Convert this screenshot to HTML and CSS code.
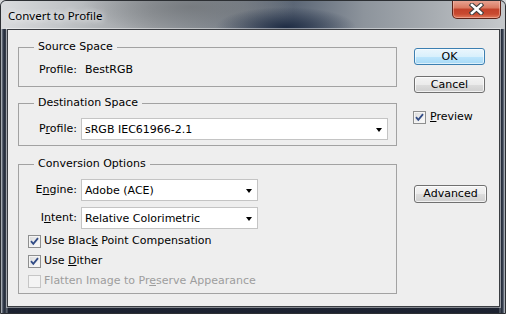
FILE: index.html
```html
<!DOCTYPE html>
<html>
<head>
    <title>Convert to Profile</title>
    <meta charset="utf-8">
    <link rel="stylesheet" href="styles.css">
</head>
<body>
    <div class="window">
        <div class="titlebar">
            <span class="title">Convert to Profile</span>
            <div class="close">
                <svg width="15" height="12" viewBox="0 0 15 12">
                    <path d="M3 2 L12 10 M12 2 L3 10" stroke="#3d3d3d" stroke-width="4.6" stroke-linecap="square" fill="none"/>
                    <path d="M3 2 L12 10 M12 2 L3 10" stroke="#ffffff" stroke-width="2.6" stroke-linecap="square" fill="none"/>
                </svg>
            </div>
        </div>

        <div class="client">
            <div class="groups">
                <fieldset class="group">
                    <legend>Source Space</legend>
                    <div class="body body-source">
                        <div class="row">
                            <span class="lbl">Profile:</span>
                            <span class="value">BestRGB</span>
                        </div>
                    </div>
                </fieldset>

                <fieldset class="group group-dest">
                    <legend>Destination Space</legend>
                    <div class="body body-dest">
                        <div class="row">
                            <span class="lbl">P<u>r</u>ofile:</span>
                            <div class="select select-wide">
                                <span>sRGB IEC61966-2.1</span>
                                <span class="arrow"></span>
                            </div>
                        </div>
                    </div>
                </fieldset>

                <fieldset class="group group-conv">
                    <legend>Conversion Options</legend>
                    <div class="body body-conv">
                        <div class="row">
                            <span class="lbl">E<u>n</u>gine:</span>
                            <div class="select">
                                <span>Adobe (ACE)</span>
                                <span class="arrow"></span>
                            </div>
                        </div>
                        <div class="row row-intent">
                            <span class="lbl">I<u>n</u>tent:</span>
                            <div class="select">
                                <span>Relative Colorimetric</span>
                                <span class="arrow"></span>
                            </div>
                        </div>
                        <div class="checks">
                            <label class="check">
                                <span class="box checked"></span>
                                <span>Use Blac<u>k</u> Point Compensation</span>
                            </label>
                            <label class="check">
                                <span class="box checked"></span>
                                <span>Use <u>D</u>ither</span>
                            </label>
                            <label class="check disabled">
                                <span class="box"></span>
                                <span>Flatten Image to Pr<u>e</u>serve Appearance</span>
                            </label>
                        </div>
                    </div>
                </fieldset>
            </div>

            <div class="actions">
                <button class="btn btn-default">OK</button>
                <button class="btn btn-cancel">Cancel</button>
                <label class="check preview">
                    <span class="box checked"></span>
                    <span><u>P</u>review</span>
                </label>
                <button class="btn btn-adv">Advanced</button>
            </div>
        </div>
    </div>
</body>
</html>
```

FILE: styles.css
```css
html, body {
    margin: 0;
    padding: 0;
}
body {
    width: 506px;
    height: 314px;
    overflow: hidden;
    background: #d4d6d8;
    font-family: "DejaVu Sans", sans-serif;
    font-size: 11px;
    color: #000;
}
.window {
    width: 506px;
    height: 314px;
    box-sizing: border-box;
    border: 1px solid #2c2f33;
    border-radius: 6px 6px 0 0;
    display: flex;
    flex-direction: column;
    overflow: hidden;
    background:
        linear-gradient(to right, #c9cdd1 0, #3b4454 2px, #222a38 4px, #6b727c 6px, rgba(0,0,0,0) 7px),
        linear-gradient(to left, #c9cdd1 0, #3b4454 2px, #1f2735 4px, #6b727c 5px, rgba(0,0,0,0) 6px),
        linear-gradient(to bottom, #555d69 0, #2f3745 60%, #1c2230 100%);
}
.titlebar {
    height: 28px;
    display: flex;
    justify-content: space-between;
    align-items: flex-start;
    background:
        radial-gradient(ellipse 70px 20px at 285px 26px, rgba(28,42,66,0.95), rgba(28,42,66,0)),
        radial-gradient(ellipse 110px 26px at 190px 6px, rgba(110,114,118,0.7), rgba(110,114,118,0)),
        linear-gradient(to right, #dadcde 0, #c2c5c8 12%, #9a9ea2 30%, #7a818a 48%, #5b6676 58%, #8d949c 72%, #a8adb2 86%, #c6c9cc 100%);
}
.title {
    margin: 7px 0 0 7px;
    font-family: "Noto Sans", "Open Sans", sans-serif;
    font-size: 11.5px;
    line-height: 16px;
    color: #000;
    text-shadow: 0 0 6px #fff, 0 0 10px rgba(255,255,255,0.8);
}
.close {
    width: 47px;
    height: 18px;
    margin: -1px 4px 0 0;
    border: 1px solid #5c2318;
    border-top: none;
    border-radius: 0 0 5px 5px;
    display: flex;
    align-items: center;
    justify-content: center;
    background: linear-gradient(to bottom, #e9a898 0, #d9785f 45%, #c2412a 50%, #c94a30 78%, #e07a5c 100%);
    box-shadow: inset 0 0 0 1px rgba(255,210,200,0.45);
}
.client {
    flex: 1;
    margin: 0 5px 6px 6px;
    border: 1px solid #3a3d42;
    background: #eeeeee;
    display: flex;
    padding: 10px 0 0 10px;
    box-shadow: 0 0 0 1px rgba(255,255,255,0.45);
}
.groups {
    width: 379px;
}

/* group boxes */
.group {
    margin: 0;
    padding: 0;
    border: 1px solid #a2a2a2;
    min-width: 0;
}
.group legend {
    margin-left: 15px;
    padding: 0 4px;
    line-height: 14px;
}
.group-dest {
    margin-top: 9px;
}
.group-conv {
    margin-top: 11px;
}
.body-source {
    padding: 9px 0 9px 0;
}
.body-dest {
    padding: 8px 0 5px 0;
}
.body-conv {
    padding: 8px 0 2px 0;
}
.row {
    display: flex;
    align-items: center;
    gap: 4px;
}
.row-intent {
    margin-top: 6px;
}
.lbl {
    width: 58px;
    text-align: right;
    line-height: 14px;
}
.value {
    padding-left: 4px;
    line-height: 14px;
}
.select {
    width: 177px;
    height: 22px;
    box-sizing: border-box;
    border: 1px solid #c4c4c4;
    background: #fff;
    display: flex;
    align-items: center;
    justify-content: space-between;
    padding: 0 5px 0 3px;
}
.select-wide {
    width: 307px;
}
.arrow {
    width: 0;
    height: 0;
    border-left: 3.5px solid transparent;
    border-right: 3.5px solid transparent;
    border-top: 4px solid #000;
    margin-top: 1px;
}

/* checkboxes */
.checks {
    margin-top: 2px;
    padding-left: 9px;
}
.check {
    display: flex;
    align-items: center;
    gap: 3px;
    height: 20px;
    line-height: 14px;
}
.box {
    width: 13px;
    height: 13px;
    box-sizing: border-box;
    border: 1px solid #8e8f8f;
    background: linear-gradient(135deg, #d9d9d9 0, #f7f7f7 80%);
    box-shadow: inset 0 0 0 1px #f4f4f4;
}
.box.checked {
    background:
        url("data:image/svg+xml,%3Csvg xmlns='http://www.w3.org/2000/svg' width='11' height='11'%3E%3Cpath d='M2 5.2 L4.3 7.8 L9 2.2' stroke='%23324c86' stroke-width='1.8' fill='none'/%3E%3C/svg%3E") center / 11px 11px no-repeat,
        linear-gradient(135deg, #d9d9d9 0, #f7f7f7 80%);
}
.check.disabled {
    color: #9d9d9d;
}
.check.disabled .box {
    border-color: #c6c6c6;
    background: #f4f4f4;
}

/* right column */
.actions {
    margin-left: 17px;
    padding-top: 8px;
    display: flex;
    flex-direction: column;
    align-items: flex-start;
}
.btn {
    width: 71px;
    height: 17px;
    box-sizing: border-box;
    padding: 0;
    border: 1px solid #707070;
    border-radius: 3px;
    font-family: "DejaVu Sans", sans-serif;
    font-size: 11px;
    line-height: 14px;
    color: #000;
    background: linear-gradient(to bottom, #f3f3f3 0, #ebebeb 50%, #dddddd 51%, #cfcfcf 100%);
    box-shadow: inset 0 0 0 1px rgba(255,255,255,0.7);
}
.btn-default {
    border-color: #3c7fb1;
    background: linear-gradient(to bottom, #eaf6fd 0, #d9f0fc 50%, #bee6fd 51%, #a7d9f5 100%);
    box-shadow: inset 0 0 0 1px rgba(255,255,255,0.6);
}
.btn-cancel {
    margin-top: 11px;
}
.preview {
    margin: 14px 0 0 -1px;
    gap: 4px;
}
.btn-adv {
    width: 73px;
    height: 18px;
    margin-top: 58px;
}
```
